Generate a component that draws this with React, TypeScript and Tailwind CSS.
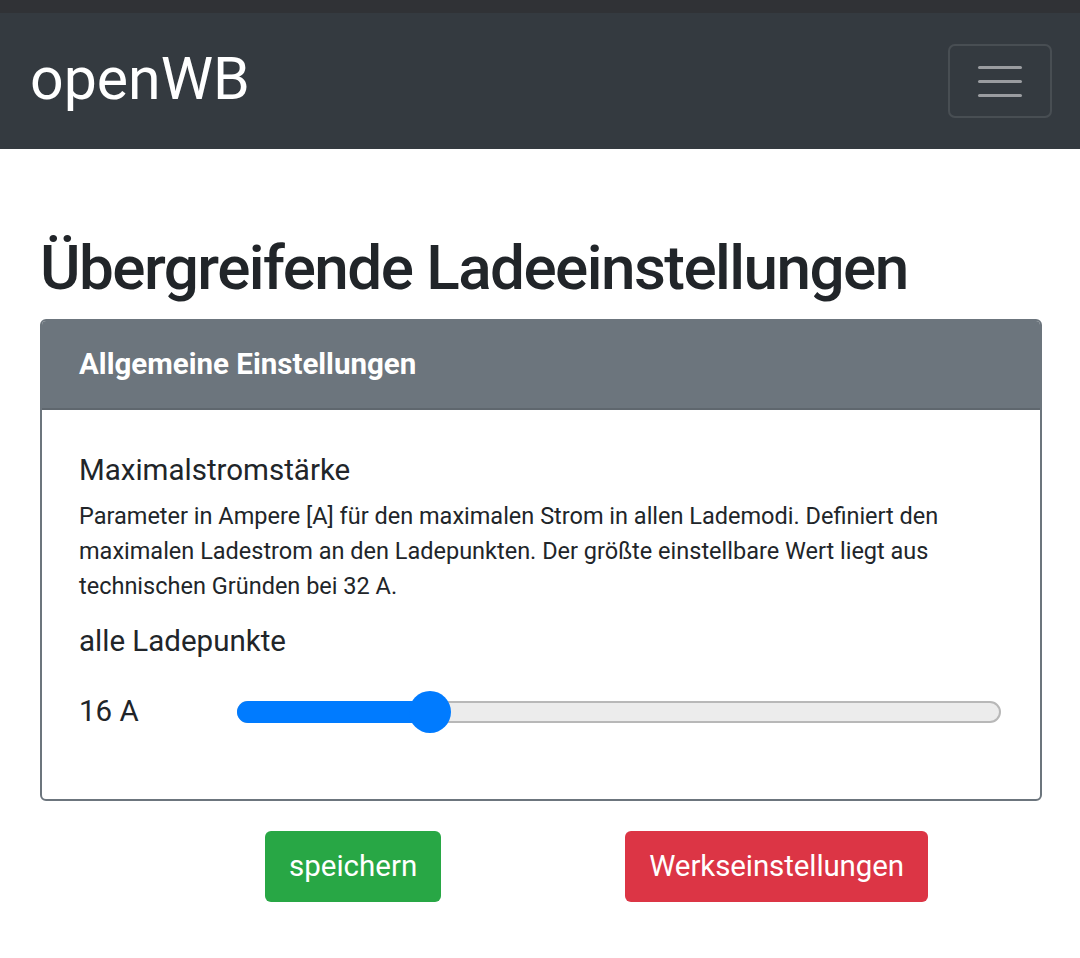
import { useState } from "react";

export default function App() {
  const [current, setCurrent] = useState(16);
  const min = 11;
  const max = 32;
  const ratio = (current - min) / (max - min);

  return (
    <div className="min-h-screen bg-white font-['Roboto',sans-serif] text-[#212529]">
      <div className="h-[13px] bg-[#303236]" />
      <nav className="h-[136px] bg-[#343a40] flex items-center justify-between pl-[30px] pr-[28px]">
        <span className="text-white text-[59px] leading-none pb-[6px]">openWB</span>
        <button className="w-[104px] h-[74px] border-2 border-white/10 rounded-[7px] flex flex-col items-center justify-center gap-[11px]">
          <span className="block w-[44px] h-[3px] rounded-full bg-[#9a9ca0]" />
          <span className="block w-[44px] h-[3px] rounded-full bg-[#9a9ca0]" />
          <span className="block w-[44px] h-[3px] rounded-full bg-[#9a9ca0]" />
        </button>
      </nav>

      <main className="px-[40px] pt-[80px]">
        <h1 className="text-[62px] font-medium leading-[77px] mb-[13px] tracking-[-1.55px]">
          Übergreifende Ladeeinstellungen
        </h1>

        <section className="w-[1002px] border-2 border-[#6c757d] rounded-[6px] overflow-hidden">
          <header className="h-[89px] bg-[#6c757d] border-b-2 border-[#5f676e] flex items-center px-[37px]">
            <h2 className="text-white text-[29.5px] font-bold">Allgemeine Einstellungen</h2>
          </header>
          <div className="px-[37px] pt-[43px] pb-[64px]">
            <h3 className="text-[29.5px] leading-[1.2]">Maximalstromstärke</h3>
            <p className="mt-[11px] text-[23.5px] leading-[35px] w-[900px]">
              Parameter in Ampere [A] für den maximalen Strom in allen Lademodi. Definiert den
              maximalen Ladestrom an den Ladepunkten. Der größte einstellbare Wert liegt aus
              technischen Gründen bei 32 A.
            </p>
            <h3 className="mt-[20px] text-[29.5px] leading-[1.2]">alle Ladepunkte</h3>
            <div className="mt-[29px] flex items-center h-[46px]">
              <span className="w-[158px] text-[29.5px] leading-[1.2]">{current} A</span>
              <div className="relative w-[764px] h-[22px]">
                <div className="absolute inset-0 rounded-full bg-[#ececec] border-2 border-[#b8b8b8]" />
                <div
                  className="absolute left-0 top-0 h-full rounded-full bg-[#007bff]"
                  style={{ width: `calc(21px + ${ratio} * (100% - 42px))` }}
                />
                <div
                  className="absolute top-1/2 w-[42px] h-[42px] -translate-y-1/2 rounded-full bg-[#007bff]"
                  style={{ left: `calc(${ratio} * (100% - 42px))` }}
                />
                <input
                  type="range"
                  min={min}
                  max={max}
                  value={current}
                  onChange={(e) => setCurrent(Number(e.target.value))}
                  className="absolute inset-0 w-full h-full opacity-0 cursor-pointer"
                />
              </div>
            </div>
          </div>
        </section>

        <div className="flex pl-[225px] gap-[184px] pt-[30px]">
          <button className="h-[71px] px-[24px] rounded-[6px] bg-[#28a745] text-white text-[29.5px]">
            speichern
          </button>
          <button className="h-[71px] px-[24px] rounded-[6px] bg-[#dc3545] text-white text-[29.5px] tracking-[-0.1px]">
            Werkseinstellungen
          </button>
        </div>
      </main>
    </div>
  );
}
